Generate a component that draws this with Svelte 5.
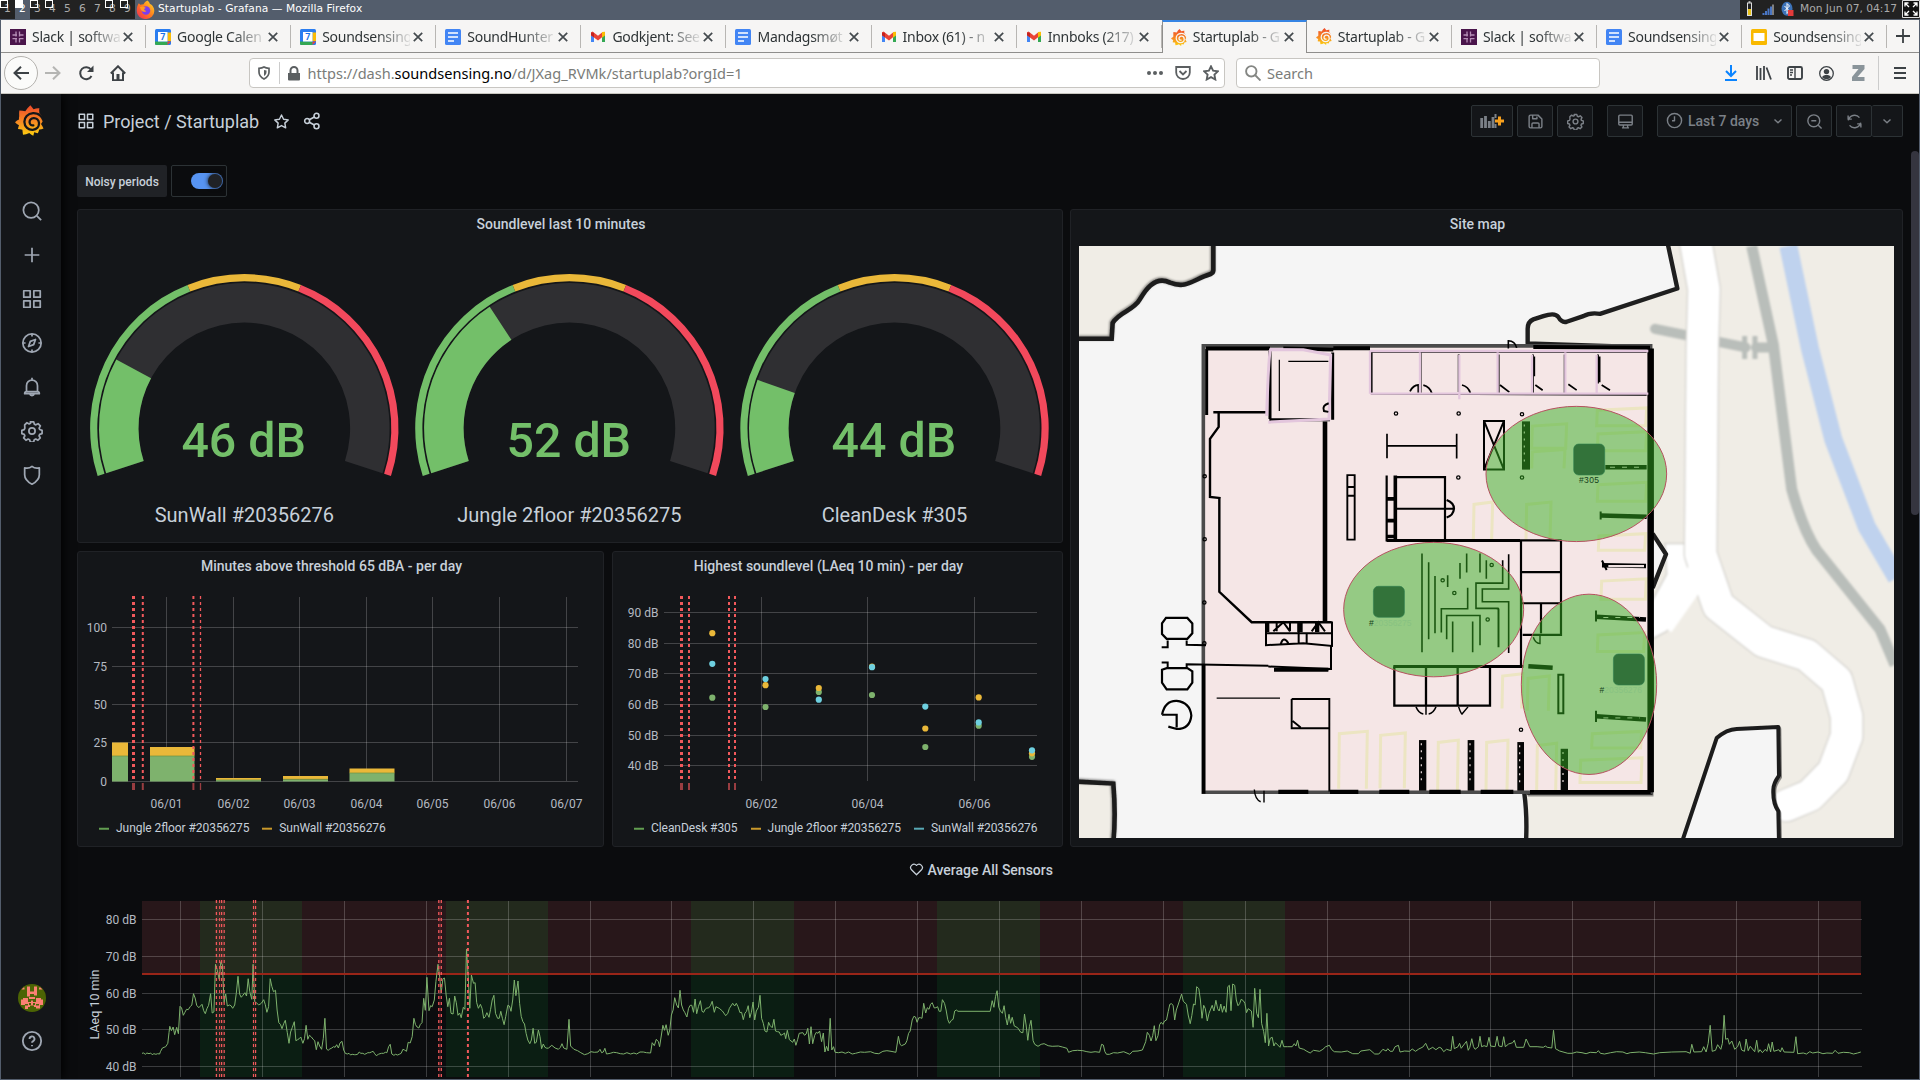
<script>
  const tags = [1, 2, 3, 4, 5, 6, 7, 8, 9];
  const occupied = [1, 3, 4, 8, 9];

  const tabs = [
    { icon: 'slack', text: 'Slack | softwa' },
    { icon: 'cal', text: 'Google Calen' },
    { icon: 'cal', text: 'Soundsensing' },
    { icon: 'doc', text: 'SoundHunter' },
    { icon: 'gmail', text: 'Godkjent: See' },
    { icon: 'doc', text: 'Mandagsmøt' },
    { icon: 'gmail', text: 'Inbox (61) - n' },
    { icon: 'gmail', text: 'Innboks (217)' },
    { icon: 'grafana', text: 'Startuplab - G', active: true },
    { icon: 'grafana', text: 'Startuplab - G' },
    { icon: 'slack', text: 'Slack | softwa' },
    { icon: 'doc', text: 'Soundsensing' },
    { icon: 'slides', text: 'Soundsensing' }
  ];

  const icons = {
    search: '<circle cx="11" cy="11" r="8.4"/><path d="M17.3 17.3 22 22"/>',
    plus: '<path d="M12 4v16M4 12h16"/>',
    apps: '<path d="M3 3h7v7H3zM14 3h7v7h-7zM3 14h7v7H3zM14 14h7v7h-7z"/>',
    compass: '<circle cx="12" cy="12" r="10"/><path d="M12 2v3M12 19v3M2 12h3M19 12h3M15.8 8.2 13.8 13.8 8.2 15.8 10.2 10.2z"/>',
    bell: '<path d="M12 2v2.5M6 17v-6.5a6 6 0 0 1 12 0V17M4 19.3c0-1.5 1-2.3 2-2.3h12c1 0 2 .8 2 2.3zM9.5 19.5a2.6 2.6 0 0 0 5 0"/>',
    cog: '<circle cx="12" cy="12" r="3.4"/><path d="M10.2 2h3.6l.8 2.6 1.6.7 2.4-1.3 2.5 2.5-1.3 2.4.6 1.5 2.6.9v3.5l-2.6.8-.7 1.6 1.3 2.4-2.5 2.5-2.4-1.3-1.6.7-.8 2.6h-3.5l-.8-2.6-1.6-.7-2.4 1.3-2.5-2.5 1.3-2.4-.7-1.6-2.6-.8v-3.5l2.6-.8.7-1.6L4 5.4 6.5 3l2.400 1.300 1.500-.7z"/>',
    shield: '<path d="M4 4.200c3 .8 5.700.3 8-1.700 2.300 2 5 2.500 8 1.700v7.500c0 4.500-3.500 8-8 10.300-4.500-2.300-8-5.800-8-10.300z"/>',
    help: '<circle cx="12" cy="12" r="10"/><path d="M9.300 9.700a2.700 2.700 0 1 1 4 2.400c-.9.5-1.300.9-1.300 1.700M12 16.300v1.300"/>',
    star: '<path d="M12 2.800l2.900 6 6.600.9-4.800 4.600 1.200 6.600L12 17.700l-5.900 3.200 1.200-6.600L2.500 9.700l6.600-.9z"/>',
    share: '<circle cx="18" cy="5" r="3.300"/><circle cx="5.500" cy="12" r="3.300"/><circle cx="18" cy="19" r="3.300"/><path d="M8.400 10.400 15.100 6.700M8.400 13.600l6.700 3.700"/>',
    save: '<path d="M3 5a2 2 0 0 1 2-2h10.500L21 8.500V19a2 2 0 0 1-2 2H5a2 2 0 0 1-2-2zM8 3v5h6V5M7 21v-5.500a1.500 1.500 0 0 1 1.500-1.500h7a1.500 1.500 0 0 1 1.500 1.500V21"/>',
    monitor: '<path d="M4 3h16a1.500 1.500 0 0 1 1.500 1.500v11A1.500 1.500 0 0 1 20 17H4a1.500 1.500 0 0 1-1.500-1.500v-11A1.500 1.500 0 0 1 4 3zM2.500 13h19M9 17v4h6v-4M7 21h10"/>',
    clock: '<circle cx="12" cy="12" r="10"/><path d="M12 6v6.300H8.500"/>',
    down: '<path d="M6 9.500l6 5.500 6-5.500"/>',
    zoomout: '<circle cx="11" cy="11" r="8.400"/><path d="M17.300 17.300 22 22M7.500 11h7"/>',
    sync: '<path d="M3.300 10.500A9 9 0 0 1 19 6.500M3 3.500v5.200h5.200M20.700 13.500A9 9 0 0 1 5 17.500M21 20.500v-5.200h-5.200"/>',
    heart: '<path d="M12 20.500 4 12.500a5 5 0 0 1 8-7 5 5 0 0 1 8 7z"/>'
  };
  const side = ['search', 'plus', 'apps', 'compass', 'bell', 'cog', 'shield'];

  // Point on a circle, angle in degrees clockwise from the top.
  const pt = (cx, cy, r, a) => {
    const t = (a * Math.PI) / 180;
    return `${(cx + r * Math.sin(t)).toFixed(2)} ${(cy - r * Math.cos(t)).toFixed(2)}`;
  };
  function arc(cx, cy, ro, ri, f0, f1) {
    const a = -108 + 216 * f0;
    const b = -108 + 216 * f1;
    const big = b - a > 180 ? 1 : 0;
    return `M${pt(cx, cy, ro, a)}A${ro} ${ro} 0 ${big} 1 ${pt(cx, cy, ro, b)}L${pt(cx, cy, ri, b)}A${ri} ${ri} 0 ${big} 0 ${pt(cx, cy, ri, a)}Z`;
  }
  const gauges = [
    { cx: 244.3, v: 0.214, value: '46 dB', label: 'SunWall #20356276' },
    { cx: 569.4, v: 0.346, value: '52 dB', label: 'Jungle 2floor #20356275' },
    { cx: 894.5, v: 0.1735, value: '44 dB', label: 'CleanDesk #305' }
  ];

  const minuteRows = [['100', 627.5], ['75', 666.5], ['50', 704.5], ['25', 742.5], ['0', 781.5]];
  const minuteCols = [['06/01', 166.5], ['06/02', 233.5], ['06/03', 299.5], ['06/04', 366.5], ['06/05', 432.5], ['06/06', 499.5], ['06/07', 566.5]];
  // x, width, top of the upper series, top of the lower series
  const bars = [[112, 16, 742.5, 756], [150, 44.5, 747, 756], [216, 45, 778, 780], [283, 45, 776, 779.3], [349.5, 45, 768.5, 773]];
  const minuteMarks = [[133.5, 3], [142.8, 2], [193.4, 2], [200.5, 1.3]];

  const levelRows = [['90 dB', 612.5], ['80 dB', 643.5], ['70 dB', 673.5], ['60 dB', 704.5], ['50 dB', 735.5], ['40 dB', 765.5]];
  const levelCols = [['06/02', 761.5], ['06/04', 867.5], ['06/06', 974.5]];
  const G = '#7eb26d', Y = '#eab839', B = '#6ed0e0';
  const dots = [
    [712.3, 697.7, G], [712.3, 633.2, Y], [712.3, 663.8, B],
    [765.5, 707, G], [765.5, 685.2, Y], [765.5, 679, B],
    [818.8, 692, G], [818.8, 688, Y], [818.8, 699.7, B],
    [872, 695, G], [872, 666.7, Y], [872, 667.2, B],
    [925.3, 747, G], [925.3, 728.5, Y], [925.3, 706.6, B],
    [978.7, 725.7, G], [978.7, 697.4, Y], [978.7, 722.4, B],
    [1032, 756.8, G], [1032, 753.3, Y], [1032, 750.3, B]
  ];
  const levelMarks = [[681.5, 3], [689, 2], [729, 2], [735, 2]];

  const avgRows = [['80 dB', 919.5], ['70 dB', 956.5], ['60 dB', 993.5], ['50 dB', 1029.5], ['40 dB', 1066.5]];
  const avgCols = Array.from({ length: 21 }, (_, i) => Math.round(180 + i * 81.9) + 0.5);
  const bands = [[200, 102], [446, 102], [691, 103], [937, 103], [1183, 102]];
  const avgMarks = [[216.4, 1.3], [219.6, 1], [221.6, 1.3], [224.2, 1.2], [253.5, 1.2], [255.6, 1.2], [438.8, 1.3], [441.3, 1.3], [467.9, 2]];

  // Average level samples, three stretches of the week.
  const s1 = '348,610 352,609 356,613 360,609 365,611 369,609 373,614 377,611 382,613 386,611 391,612 393,605 398,594 402,592 406,590 411,580 414,548 416,529 420,542 424,531 428,554 433,532 437,551 441,469 445,474 449,496 453,487 457,478 461,479 466,470 470,465 474,431 478,444 482,466 487,473 491,468 495,463 499,482 503,491 507,476 511,466 516,431 520,489 524,486 528,343 532,358 537,388 541,335 545,345 549,457 553,432 557,468 562,465 566,467 570,475 575,465 579,430 583,379 587,432 591,442 595,436 600,428 604,438 608,386 612,425 617,448 620,343 624,455 629,459 633,464 637,463 641,459 646,449 650,464 654,487 658,470 662,386 666,409 670,425 675,421 679,480 683,518 687,523 691,536 695,521 699,511 704,548 708,580 712,546 716,533 721,515 725,572 729,569 733,566 737,561 742,580 746,566 750,526 754,568 758,556 763,561 767,568 771,572 775,599 779,575 783,588 788,598 792,565 796,505 800,597 804,601 808,597 813,594 817,590 821,592 825,584 829,594 833,579 838,574 842,600 846,610 851,612 855,610 859,615 863,613 868,614 872,614 876,613 880,606 884,610 889,610 893,613 897,611 901,608 906,608 910,606 914,604 918,611 922,617 927,613 931,611 935,610 940,610 944,607 948,608 952,590 956,583 960,612 965,616 969,613 974,615 978,613 983,610 987,598 991,600 996,604 1000,577 1005,579 1010,560 1014,505 1018,524 1022,531 1026,534 1030,523 1034,518 1038,445 1042,481 1046,382 1051,482 1055,467 1059,470 1064,450 1068,395 1073,343 1077,378 1081,429 1085,386 1089,384 1093,435 1097,470 1101,445 1105,490 1110,492 1114,438 1118,458 1122,496 1126,489 1130,503 1135,472 1139,478 1143,297 1147,380 1151,475 1155,375 1160,400 1164,398 1168,458 1172,475 1177,463 1181,475 1185,505 1189,500 1193,488 1198,502 1202,478 1206,450 1210,436 1214,490 1219,505 1223,505 1227,484 1231,505 1235,524 1239,500 1244,466 1248,468 1252,484 1256,450 1260,390 1264,437 1269,393 1273,460 1277,499 1281,515 1285,522 1289,550 1293,570 1298,581 1302,570 1306,535 1310,580 1314,577 1319,540 1323,560 1327,596 1331,582 1335,592 1340,595 1344,594 1352,586 1360,594 1368,598 1373,592 1377,581 1381,594 1389,598 1394,508 1398,588 1406,598 1415,602 1423,608 1432,614 1440,611 1448,605 1456,607 1465,606 1470,598 1474,608 1478,606 1482,595 1486,612 1495,610 1503,607 1511,608 1520,611 1528,612 1536,608 1545,612 1553,609 1560,612';
  const s2 = '0,606 8,606 16,608 26,609 30,578 35,587 40,568 45,575 48,590 56,526 60,541 64,524 69,556 73,540 77,495 81,480 85,443 90,465 94,474 98,421 102,465 106,480 110,488 115,501 119,475 123,466 127,466 131,487 135,447 139,491 143,470 148,452 152,484 156,487 160,477 164,474 168,474 173,466 177,454 182,487 186,470 194,475 202,483 210,497 215,490 219,475 227,460 232,468 236,460 240,470 245,488 249,487 253,509 257,490 261,484 265,467 269,503 273,487 277,456 281,510 285,483 290,472 294,436 298,505 302,520 306,543 311,546 315,517 319,527 324,533 328,508 332,543 337,545 341,546 345,556 350,553 354,549 357,566 361,541 366,569 374,577 378,567 382,586 386,569 390,550 399,548 403,556 407,552 411,535 415,582 419,530 423,581 428,556 432,547 436,550 440,543 445,575 449,549 453,606 457,589 461,603 466,505 470,600 474,590 478,607 486,608 495,606 503,610 511,606 520,612 528,610 540,606 550,607 565,605 575,610 585,611 595,604 605,602 615,604 627,607 633,559 637,583 641,587 650,582 654,572 658,550 662,543 667,510 671,499 675,501 679,517 683,503 687,503 691,505 695,460 700,489 704,473 708,478 712,463 716,458 721,474 725,473 729,470 733,484 737,484 741,449 746,460 750,480 754,509 758,520 763,511 767,508 771,483 775,480 779,484 858,484 863,452 867,472 871,440 875,422 879,472 883,483 888,490 892,467 896,502 900,525 904,493 908,520 912,502 917,528 925,533 933,547 938,548 942,492 946,525 950,571 954,530 958,511 963,572 967,583 975,589 983,583 990,581 1000,587 1010,589 1025,588 1035,591 1046,595 1050,607 1060,602 1072,601 1085,602 1095,605 1105,607 1115,605 1126,607 1131,583 1135,585 1139,605 1143,613 1150,613 1160,608 1170,609 1185,605 1200,613 1207,604 1220,603 1231,600 1239,575 1243,547 1248,556 1252,573 1256,557 1260,527 1264,572 1269,557 1273,524 1277,517 1281,523 1285,513 1290,510 1294,485 1298,463 1302,461 1306,466 1310,510 1314,480 1319,462 1327,432 1331,454 1339,463 1343,495 1348,521 1352,497 1356,462 1360,465 1364,410 1369,416 1373,450 1377,505 1381,466 1385,476 1390,513 1394,490 1402,466 1406,483 1411,451 1415,476 1419,483 1423,462 1427,487 1431,468 1436,487 1440,410 1444,406 1448,482 1452,402 1457,406 1461,450 1465,467 1469,461 1473,448 1478,452 1482,460 1486,488 1490,476 1498,483 1502,532 1506,415 1511,490 1515,503 1519,418 1523,520 1528,545 1532,578 1536,490 1540,588 1544,565 1549,562 1553,588 1557,578';
  const s3 = '0,592 5,571 9,590 18,590 30,590 35,581 39,588 43,571 47,594 58,598 66,604 74,609 82,601 97,604 105,598 112,590 121,586 127,599 133,605 150,606 165,603 178,611 192,611 198,603 220,599 232,612 242,612 252,598 260,603 264,596 270,604 276,604 282,590 290,586 294,606 305,603 318,604 324,597 332,604 340,597 350,591 357,580 364,599 374,592 382,599 390,592 395,594 401,605 408,598 419,602 423,559 427,596 436,590 440,580 444,595 450,585 457,574 461,601 465,592 470,566 474,590 478,598 486,590 490,559 494,590 500,587 507,590 512,562 516,588 527,590 532,559 536,588 544,590 548,560 552,590 560,582 570,578 574,571 579,592 597,592 603,567 612,590 630,590 645,592 650,588 655,592 666,594 670,541 675,596 685,603 705,610 716,610 727,606 740,608 750,611 760,607 775,608 780,602 785,610 795,612 810,608 825,605 840,606 850,611 858,608 880,606 895,608 915,612 930,608 960,606 995,605 1005,610 1009,583 1014,606 1033,605 1038,590 1044,606 1049,580 1054,526 1059,604 1067,601 1072,584 1080,598 1084,580 1088,496 1092,568 1097,565 1101,583 1107,573 1114,598 1121,590 1126,574 1131,600 1138,604 1142,567 1147,602 1152,589 1163,605 1168,571 1172,607 1176,599 1182,608 1189,598 1193,604 1197,581 1202,606 1206,576 1210,604 1222,599 1226,606 1230,593 1235,606 1259,607 1264,560 1268,611 1282,609 1290,612 1298,605 1305,609 1318,606 1330,611 1340,609 1354,610 1360,601 1367,610 1380,607 1395,608 1405,612 1415,609 1423,606';
  const series = [s1, s2, s3]
    .map((s, i) =>
      s.split(' ').map((p) => {
        const [x, y] = p.split(',').map(Number);
        return `${(640 * i + x / 2.45).toFixed(1)},${(850 + y / 3).toFixed(1)}`;
      }).join(' ')
    )
    .join(' ');

  // Yellow desk outlines on the floor plan: x, y, width, height
  const desks = [
    [806, 1268, 86, 145], [930, 1272, 76, 140], [1103, 1290, 62, 128], [1248, 1290, 66, 128], [1210, 688, 58, 95],
    [1385, 490, 105, 62], [1385, 555, 100, 48], [1368, 688, 75, 95], [1580, 450, 150, 45], [1582, 510, 148, 48],
    [1582, 638, 148, 48], [1585, 768, 142, 42], [1593, 882, 136, 52], [1582, 1018, 142, 48], [1565, 1268, 150, 42],
    [1530, 1335, 186, 62], [1296, 1122, 62, 88], [1372, 1128, 66, 88], [1400, 1298, 60, 120]
  ];
  // Dark hatched shelves: x, y, width, height
  const shelves = [
    [1047, 1290, 22, 128], [1193, 1290, 20, 128], [1342, 1295, 20, 123], [1472, 1312, 22, 106],
    [1356, 484, 24, 122]
  ];
</script>

{#snippet icon(name, size, w = 2)}
  <svg class="ico" width={size} height={size} viewBox="0 0 24 24" stroke-width={w}>{@html icons[name]}</svg>
{/snippet}

{#snippet grafana(w, h)}
  <svg width={w} height={h} viewBox="0 0 29 31">
    <defs>
      <linearGradient id="flame" x1="0" y1="1" x2="0" y2="0">
        <stop offset="0" stop-color="#fcd00f" /><stop offset=".45" stop-color="#f78b22" /><stop offset="1" stop-color="#ee4a2b" />
      </linearGradient>
    </defs>
    <path fill="url(#flame)" d="M15.400.200Q17 2 18.600 4.200 21.500 3 24.400 3.300 23.800 5.500 24.300 7.800 27.600 10.500 28.300 15.500L26 19Q27.500 21 28.500 23.500 26.500 24.300 24.300 24.600 23.600 27 22.800 28.200 21 28 19.200 27.300L18.300 30.800Q15.800 29.600 14.300 28 11 29.600 8 29.800 7.600 27 7.400 24.700 5 24.300 3 24 3.300 22 4 20.200 1.800 19 0 17.200 2 15.300 4 14.500 3.800 12.800 4.200 11.200 4 8 4.300 5.400 7.500 5.500 10.300 6.200 12.400 2.800 15.400.200Z" />
    <path class="swirl" d="M29 16.500C27 10.500 22.500 8 18 8.200 12.700 8.500 9.300 12.500 9.400 17 9.500 22 13.500 25 17.700 24.800 21.700 24.500 24.200 21.600 24 18 23.800 14.900 21.300 13 18.700 13.100 16 13.300 14.400 15.400 14.600 17.500 14.800 19.600 16.500 20.700 18.300 20.300" />
  </svg>
{/snippet}

{#snippet favicon(kind)}
  {#if kind === 'grafana'}
    {@render grafana(16, 17)}
  {:else}
    <svg width="16" height="16" viewBox="0 0 16 16">
      {#if kind === 'slack'}
        <rect width="16" height="16" fill="#4a154b" />
        <path d="M6 2.500v5M9.500 2.500v5M6 9v4.500M9.500 9v4.500M2.500 6h4.500M9 6h4.500M2.500 9.700h4.500M9 9.700h4.500" stroke="#b58fb6" stroke-width="1.300" fill="none" />
      {:else if kind === 'cal'}
        <rect width="16" height="16" rx="1.500" fill="#2a7df0" />
        <path d="M12.500 3.500H16V12h-3.500z" fill="#fbbc04" /><path d="M0 12.500h12.500V16H1.500A1.500 1.500 0 0 1 0 14.500z" fill="#34a853" /><path d="M12.500 12.500H16L12.500 16z" fill="#ea4335" />
        <rect x="3" y="3" width="9.500" height="9.500" fill="#fff" />
        <text x="7.800" y="11" font-size="9" font-weight="700" text-anchor="middle" fill="#1a73e8">7</text>
      {:else if kind === 'doc'}
        <rect width="16" height="16" rx="1.500" fill="#4285f4" /><path d="M3 4h10M3 8h10M3 12h6" stroke="#fff" stroke-width="1.700" />
      {:else if kind === 'slides'}
        <rect width="16" height="16" rx="1.500" fill="#f9b900" /><rect x="2.500" y="4" width="11" height="8" fill="#fff" />
      {:else}
        <path d="M1 4v9h3V6.500z" fill="#4285f4" /><path d="M15 4v9h-3V6.500z" fill="#34a853" /><path d="M12 3l3-.2V6.500l-3 2.300z" fill="#fbbc04" />
        <path d="M1 3.500l1.500-1L8 6.800l4-3.300v4.800L8 11.500 1 6.300z" fill="#ea4335" /><path d="M1 3.500 4 3.700V8.300L1 6.300z" fill="#c5221f" />
      {/if}
    </svg>
  {/if}
{/snippet}

<div class="screen">
  <div class="wm">
    {#each tags as t}
      <span class="tag" class:sel={t === 2}>
        {#if occupied.includes(t)}<i class="sq"></i>{:else if t === 2}<i class="sq full"></i>{/if}{t}
      </span>
    {/each}
    <svg class="fox" width="19" height="19" viewBox="0 0 20 20">
      <defs><linearGradient id="fox" x1="1" y1="0" x2="0" y2="1"><stop offset="0" stop-color="#ffe226" /><stop offset=".5" stop-color="#ff7a1f" /><stop offset="1" stop-color="#f0245c" /></linearGradient></defs>
      <path fill="url(#fox)" d="M12 .5c2 1.500 2.500 3 2.500 3.500C17 5 19.300 8 19.300 11.500a9.200 8.500 0 0 1-18.500 0C.8 8 1.500 5.500 3 3.500L4.500 5 8 4.500C9 2.500 10 1.500 12 .5z" />
      <circle cx="10.500" cy="11" r="4.500" fill="#7a3df0" /><path d="M4 7.500c3-1.500 5 0 6.500 1-3 .5-2 3 .5 3-2 2-5 .5-5.500-1z" fill="#ff9a24" />
    </svg>
    <span class="wtitle">Startuplab - Grafana — Mozilla Firefox</span>
    <div class="tray">
      <svg width="54" height="20" viewBox="0 0 54 20">
        <rect x="7.500" y="3" width="4" height="12.500" fill="#222" stroke="#ddd" /><rect x="8" y="9" width="3" height="6" fill="#e8c21a" /><rect x="8.500" y="1.300" width="2" height="1.500" fill="#ddd" />
        <path d="M23.500 15v-2M26 15v-4M28.500 15V8.500M31 15V6.500" stroke="#4a76c4" stroke-width="2" /><path d="M33 15V4.500" stroke="#ddd" stroke-width="1" />
        <ellipse cx="47" cy="8.700" rx="5.500" ry="7" fill="#3c72b8" /><path d="M44.500 6l5 5-2.500 2.500V3.500l2.500 2.500-5 5" fill="none" stroke="#fff" /><rect x="48" y="10" width="5.500" height="6" fill="#e23b3b" />
      </svg>
      <span class="clock">Mon Jun 07, 04:17</span>
      <svg width="18" height="18" viewBox="0 0 18 18"><path d="M.5.500h17v17H.5z" fill="#111" stroke="#ddd" /><path d="M3 6.500V3h3.500M3 3l4 4M11.500 3H15v3.500M15 3l-4 4M3 11.500V15h3.500M3 15l4-4M15 11.500V15h-3.500M15 15l-4-4" fill="none" stroke="#fff" stroke-width="1.300" /></svg>
    </div>
  </div>

  <div class="tabs">
    {#each tabs as t}
      <div class="tab" class:active={t.active}>
        {@render favicon(t.icon)}
        <span class="tlabel">{t.text}</span>
        <svg width="10" height="10" viewBox="0 0 10 10"><path d="M.8.800l8.400 8.400M9.200.800.8 9.200" stroke="#444a4e" stroke-width="1.700" /></svg>
      </div>
    {/each}
    <div class="newtab"><svg width="14" height="14" viewBox="0 0 14 14"><path d="M7 0v14M0 7h14" stroke="#3a3f42" stroke-width="1.800" /></svg></div>
  </div>

  <div class="nav">
    <div class="back"><svg width="16" height="14" viewBox="0 0 16 14"><path d="M8 .8 1.500 7 8 13.200M1.500 7H16" fill="none" stroke="#3d4246" stroke-width="2" /></svg></div>
    <svg class="fwd" width="16" height="14" viewBox="0 0 16 14"><path d="M8 .8 14.500 7 8 13.200M14.500 7H0" fill="none" stroke="#b5b5b3" stroke-width="2" /></svg>
    <svg class="rel" width="16" height="16" viewBox="0 0 16 16"><path d="M13.500 11A6 6 0 1 1 13 4.500" fill="none" stroke="#3d4246" stroke-width="2" /><path d="M15.500.500v6.500H9z" fill="#3d4246" /></svg>
    <svg class="home" width="16" height="16" viewBox="0 0 16 16"><path d="M.8 8.500 8 1.300l7.200 7.200M3 7.500v7.700h10V7.500" fill="none" stroke="#3d4246" stroke-width="2" /><path d="M6.500 9h3v6h-3z" fill="#3d4246" /></svg>
    <div class="url">
      <svg width="12" height="14" viewBox="0 0 12 14"><path d="M1 2.300C3 2.300 4.500 2 6 1c1.500 1 3 1.300 5 1.300V6c0 3.500-2 5.500-5 7-3-1.500-5-3.500-5-7z" fill="none" stroke="#5b5f61" stroke-width="1.700" /><path d="M6 4v6c1.700-1 2.500-2.300 2.500-4V4.500z" fill="#5b5f61" /></svg>
      <i class="vsep"></i>
      <svg width="12" height="15" viewBox="0 0 12 15"><path d="M0 7h12v6.500a1 1 0 0 1-1 1H1a1 1 0 0 1-1-1z" fill="#5b5f61" /><path d="M2.500 7V4.500a3.500 3.500 0 0 1 7 0V7" fill="none" stroke="#5b5f61" stroke-width="2" /></svg>
      <span class="addr">https://dash.<b>soundsensing.no</b>/d/JXag_RVMk/startuplab?orgId=1</span>
      <svg width="16" height="16" viewBox="0 0 16 16" fill="#5b5f61"><circle cx="2" cy="8" r="2" /><circle cx="8" cy="8" r="2" /><circle cx="14" cy="8" r="2" /></svg>
      <svg width="16" height="16" viewBox="0 0 16 16" fill="none" stroke="#5b5f61" stroke-width="1.800"><path d="M1.200 2h13.600v5.500A6.800 6.500 0 0 1 1.200 7.500zM4.500 6 8 9.500 11.500 6" /></svg>
      <svg width="16" height="16" viewBox="1 1 22 22" fill="none" stroke="#5b5f61" stroke-width="2.600">{@html icons.star}</svg>
    </div>
    <div class="srch">
      <svg width="16" height="16" viewBox="0 0 16 16" fill="none" stroke="#848683" stroke-width="1.900"><circle cx="6.300" cy="6.300" r="5.200" /><path d="m10 10 5.500 5.500" /></svg>
      <span>Search</span>
    </div>
    <div class="tools">
      <svg width="12" height="16" viewBox="0 0 12 16"><path d="M6 0v11M1 6l5 5 5-5M0 15h12" fill="none" stroke="#0a84ff" stroke-width="2" /></svg>
      <svg width="16" height="14" viewBox="0 0 16 14"><path d="M1 0v14M4.500 2v12M8 0v14M10.500 1.500 15 13.500" fill="none" stroke="#3d4246" stroke-width="1.800" /></svg>
      <svg width="16" height="14" viewBox="0 0 16 14"><rect x="1" y="1" width="14" height="12" rx="1.500" fill="none" stroke="#3d4246" stroke-width="1.900" /><path d="M8 1v12M3 4h3M3 6.500h3M3 9h2" stroke="#3d4246" stroke-width="1.400" /></svg>
      <svg width="15" height="15" viewBox="0 0 15 15"><circle cx="7.500" cy="7.500" r="6.800" fill="none" stroke="#3d4246" stroke-width="1.300" /><circle cx="7.500" cy="5.600" r="2.700" fill="#3d4246" /><path d="M3 11.200c1-2 2.500-2.300 4.500-2.300s3.500.3 4.500 2.300a6 6 0 0 1-9 0z" fill="#3d4246" /></svg>
      <svg width="13" height="16" viewBox="0 0 13 16"><path d="M.5 0h12v4L5.500 12h7v4H0v-4l6.500-8h-6z" fill="#8a949a" /></svg>
      <i class="vsep tall"></i>
      <svg width="12" height="12" viewBox="0 0 12 12"><path d="M0 1h12M0 6h12M0 11h12" stroke="#3d4246" stroke-width="2" /></svg>
    </div>
  </div>

  <div class="app">
    <aside>
      <div class="logo">{@render grafana(29, 31)}</div>
      {#each side as s}<div class="sitem">{@render icon(s, 22, 1.9)}</div>{/each}
      <div class="grow"></div>
      <svg class="avatar" width="28" height="28" viewBox="0 0 28 28">
        <circle cx="14" cy="14" r="14" fill="#4c6404" />
        <path fill="#fb8073" d="M9 2.500h3v5h4v-5h3v9h-3V10h-4v2.500h-3zM5 14h5v4h3v-1.500h2V18h3v-4h5v1.500h2V21h-3v3.500h-4V23h-2v-1.500h-4V23h-2v2H7v-4H3v-5.500h2zM11 13h6v2h-6zM3.500 5.500h3v-2h-1zM21 3.500h1.500l2 2H21z" />
        <path fill="#4c6404" d="M7 20h3v1.500H7zM18 20h3v1.500h-3zM11 19h2v2h-2zM15 19h2v2h-2z" />
      </svg>
      <div class="help">{@render icon('help', 22, 2)}</div>
    </aside>

    <main>
      <header>
        {@render icon('apps', 18, 2)}
        <h1>Project / Startuplab</h1>
        <span class="st">{@render icon('star', 17, 2)}</span>
        {@render icon('share', 18, 2.1)}
        <div class="btns">
          <div class="btn add"><svg width="25" height="14" viewBox="0 0 25 14"><path d="M1.700 4v10M5.500 2v12M9.300 7v7M13 3v11" stroke="#7b8087" stroke-width="2.800" /><path d="M15.500 0v4M15.500 10v4" stroke="#7b8087" stroke-width="2" /><path d="M19.500 2.500v9M15 7h9" stroke="#f7a01d" stroke-width="3" /></svg></div>
          <div class="btn">{@render icon('save', 17)}</div>
          <div class="btn">{@render icon('cog', 17)}</div>
          <div class="btn mon">{@render icon('monitor', 17)}</div>
          <div class="btn time">{@render icon('clock', 17)}<span>Last 7 days</span>{@render icon('down', 14, 2.5)}</div>
          <div class="btn">{@render icon('zoomout', 17)}</div>
          <div class="btn ref">{@render icon('sync', 17)}</div>
          <div class="btn dd">{@render icon('down', 14, 2.5)}</div>
        </div>
      </header>

      <div class="vars">
        <span class="vlabel">Noisy periods</span>
        <span class="vbox"><span class="toggle"><i></i></span></span>
      </div>

      <div class="grid">
        <section class="panel wide">
          <h2>Soundlevel last 10 minutes</h2>
          <svg width="985" height="304" viewBox="77 239 985 304">
            {#each gauges as g}
              <path d={arc(g.cx, 428.3, 154.2, 147, 0, 0.4)} fill="#73bf69" />
              <path d={arc(g.cx, 428.3, 154.2, 147, 0.4, 0.6)} fill="#eab839" />
              <path d={arc(g.cx, 428.3, 154.2, 147, 0.6, 1)} fill="#f2495c" />
              <path d={arc(g.cx, 428.3, 145.3, 105.8, 0, 1)} fill="#2f2f32" />
              <path d={arc(g.cx, 428.3, 145.3, 105.8, 0, g.v)} fill="#73bf69" />
              <text class="gval" x={g.cx - 0.6} y="456.700">{g.value}</text>
              <text class="glab" x={g.cx} y="522">{g.label}</text>
            {/each}
          </svg>
        </section>

        <section class="panel map">
          <h2>Site map</h2>
          <svg width="815" height="592" viewBox="1079 246 815 592" class="plan">
            <defs>
              <filter id="shadow" x="-10%" y="-10%" width="120%" height="120%"><feDropShadow dx="-2" dy="-2" stdDeviation="2.500" flood-color="#000" flood-opacity=".5" /></filter>
              <filter id="shadow2" x="-10%" y="-10%" width="120%" height="120%"><feDropShadow dx="3" dy="4" stdDeviation="2" flood-color="#000" flood-opacity=".45" /></filter>
              <filter id="soft"><feGaussianBlur stdDeviation=".9" /></filter>
            </defs>
            <rect x="1079" y="246" width="815" height="592" fill="#f0ede6" />
            <g filter="url(#soft)">
              <g transform="translate(1070 230) scale(.33333 .39541)" class="ns">
                <path d="M1755 250 2027 297M2058 297h50" stroke="#b9beba" stroke-width="10" stroke-linecap="round" />
                <path d="M2024 268v58M2055 268v58" stroke="#b9beba" stroke-width="5" />
                <path d="M2045 40 2110 290 2165 655Q2200 760 2240 810L2430 1010 2475 1100" stroke="#b9beba" stroke-width="11" />
                <path d="M2155 40 2220 300 2290 530 2390 750 2480 880" stroke="#bfd2ee" stroke-width="18" />
                <path d="M1785 793H1892V905L1875 915 1790 1015 1745 1035V940L1790 870Z" fill="#fff" stroke="#d3d1cc" stroke-width="1.500" />
                <path d="M1877 30 1902 150 1897 300 1892 820 1945 950 2080 1040 2210 1075 2300 1140 2330 1230V1280L2290 1370 2220 1430 2150 1455" stroke="#d3d1cc" stroke-width="34" stroke-linecap="round" stroke-linejoin="round" />
                <path d="M1877 30 1902 150 1897 300 1892 820 1945 950 2080 1040 2210 1075 2300 1140 2330 1230V1280L2290 1370 2220 1430 2150 1455" stroke="#fff" stroke-width="31.500" stroke-linecap="round" stroke-linejoin="round" />
                <path d="M1892 790V860L1775 1000" stroke="#fff" stroke-width="24" />
              </g>
            </g>
            <g transform="translate(1070 230) scale(.33333 .39541)" class="ns">
              <path d="M20 275 125 275 128 235C150 205 190 205 210 175 240 130 270 120 300 133 350 150 370 125 420 112Q431 108 430 100V30H1790L1822 148 1590 212Q1560 208 1540 218L1490 232Q1475 235 1465 220 1455 208 1420 218L1390 226Q1373 232 1373 250V290L1740 297V770L1788 820 1748 905V1425H1365L1368 1550H130Q138 1480 130 1400L20 1395Z" fill="#f5f5f5" />
              <path d="M20 275 125 275 128 235C150 205 190 205 210 175 240 130 270 120 300 133 350 150 370 125 420 112Q431 108 430 100V30H20Z" fill="#f0ede6" /><path d="M20 1395 130 1400Q138 1480 130 1550H20Z" fill="#f0ede6" />
              <g filter="url(#shadow)"><path d="M20 275 125 275 128 235C150 205 190 205 210 175 240 130 270 120 300 133 350 150 370 125 420 112Q431 108 430 100V30" stroke="#1f1f1f" stroke-width="4.600" /><path d="M20 1395 130 1400Q138 1480 130 1550" stroke="#1f1f1f" stroke-width="4.600" /></g>
              <path d="M1792 30 1822 148 1590 212Q1560 208 1540 218L1490 232Q1475 235 1465 220 1455 208 1420 218L1390 226Q1373 232 1373 250V287L1740 297M1748 768 1788 820 1748 905M1363 1425Q1372 1480 1368 1550" stroke="#1f1f1f" stroke-width="4.400" stroke-linejoin="round" />
              <g filter="url(#shadow2)"><path d="M1835 1550 1940 1285Q1970 1263 2000 1262L2125 1257 2127 1380Q2110 1400 2110 1415 2108 1450 2125 1470L2127 1550" fill="#f5f5f5" stroke="#1f1f1f" stroke-width="4" stroke-linejoin="round" />
              <path d="M1370 1422H1740V1000" stroke="#111" stroke-width="5" /></g>

              <path d="M400 293H1742V1422H400Z" fill="#f5e6e6" stroke="#4b4b4b" stroke-width="3.600" />
              {#each desks as d}<path d="M{d[0]} {d[1] + d[3]} {d[0] + 2} {d[1] + 6} {d[0] + d[2]} {d[1]} {d[0] + d[2] - 3} {d[1] + d[3]}{d[2] > 100 ? 'z' : ''}" stroke="#ece5c2" stroke-width="3" />{/each}

              <g stroke="#000">
                <path d="M408 300H600M640 300 790 302M790 299H900" stroke-width="4" />
                <path d="M410 300V468M600 306V478M780 480 598 480M788 310V480" stroke-width="3" />
                <path d="M430 461H590M446 463V498L420 528V675L452 678M448 680V915L545 992H785" stroke-width="2.400" /><path d="M628 328V458M655 332H775" stroke-width="1.200" />
                <path d="M765 484V990" stroke-width="4.600" />
                <path d="M588 992V1050L700 1045 786 1052V990M590 1020H786M620 992V1015M660 992V1015M686 992V1045M710 1045V1020M740 992V1015M610 1015 640 992 660 1015M725 1015 745 992 765 1015M632 1048Q640 1025 655 1045" stroke-width="2" />
                <path d="M588 1005H598M682 1005H698M735 1005H748" stroke-width="9" />
                <path d="M783 1050V1110L595 1104M612 1112H775M275 1094H293V1106M350 1106V1098L595 1102M275 1055H293V1038M350 1038V1049L408 1050" stroke-width="2" /><path d="M612 1112H775" stroke-width="4" />
                <path d="M288 981H352L367 995V1020L352 1034H290L276 1022V995ZM290 1108H352L367 1116V1145L352 1162H290L276 1145V1112Z" stroke-width="2.200" />
                <path d="M276 1226Q285 1190 320 1191 360 1195 364 1228 360 1262 320 1262L295 1256M276 1226H320V1258" stroke-width="2.200" />
                <path d="M440 1184H630" stroke-width="1.300" /><path d="M665 1186H778V1420M665 1186V1260H778M668 1242 692 1258" stroke-width="1.900" />
                <path d="M401 1100V1426" stroke-width="3.600" />
                <path d="M625 1421H715M780 1421H865M928 1421H1018M1078 1421H1172M1232 1421H1330" stroke-width="4.200" /><path d="M553 1415Q555 1440 572 1446M582 1418V1448" stroke-width="1.400" />
                <path d="M1742 300V1422" stroke-width="6.500" /><path d="M1380 1421H1742" stroke-width="4" /><path d="M1390 296 1740 298" stroke-width="4" /><path d="M1315 300V280Q1335 280 1340 298" stroke-width="1.600" />
                <path d="M903 308H1730M903 414 1730 417M905 308V412M1052 308V415M1166 315V410M1286 315V415M1389 315V415M1484 315V415M1584 315V388" stroke-width="1.800" /><path d="M1587 320V385M1391 320V370" stroke-width="3" />
                <path d="M1020 408Q1030 392 1045 392V412M1060 392Q1080 396 1086 414M1176 392Q1195 396 1201 412M1290 392 1318 410M1396 392 1418 405M1495 390 1520 405M1595 392 1620 405" stroke-width="1.800" />
                <path d="M951 515V577M951 546H1160M1160 515V578" stroke-width="1.700" />
                <path d="M1242 483H1302V606H1242ZM1242 483 1302 606M1302 483 1242 606" stroke-width="2" />
                <path d="M832 620V783H854V620ZM832 650H854M832 672H854" stroke-width="1.900" />
                <path d="M976 625H1125V783M976 705H1150M1130 683Q1152 690 1152 705 1150 722 1130 727M950 621V785H1475M1353 786V1104M1473 786V1024H1358M1353 865H1473M1353 944H1473M1413 944V1020" stroke-width="2.200" />
                <path d="M976 621V785M951 680H972M951 735H972M951 775H972" stroke-width="3.600" /><path d="M950 785H1350M970 1104H1360" stroke-width="3" />
                <path d="M973 1104V1203H1260V1104M1068 1104V1203M1163 1104V1203" stroke-width="2.300" /><path d="M1068 1203V1226M1038 1206Q1046 1222 1060 1224M1098 1206Q1090 1222 1076 1224M1166 1206Q1172 1222 1176 1224L1194 1206" stroke-width="1.500" />
                <path d="M1056 818V1068M1076 840V1035M1095 875V1020M1193 905V958H1114V1018M1130 1035V975H1230V1050M1148 990V1068M1208 990V1068M1286 958V1055M1286 893H1218V957H1286M1286 908H1237V940H1286M1170 842V882M1190 818V866M1230 818V866M1249 835V882M1133 873V903M1280 893H1298V835M1280 908H1316V820M1280 940H1316V1070M1280 958H1285V1055" stroke-width="1.600" />
                <path d="M1606 600H1730M1592 722 1730 725M1596 848 1728 850M1578 978 1728 985M1578 1230 1728 1238M1375 1103 1448 1107" stroke-width="4.500" /><path d="M1578 962V990M1578 1216V1244M1592 712V732M1596 836 1610 860" stroke-width="2" />
                <path d="M1465 1125V1222H1480V1125Z" stroke-width="2" />
                <path d="M1390 1030Q1395 1045 1410 1046V1024" stroke-width="1.400" />
              </g>
              {#each shelves as s}<rect x={s[0]} y={s[1]} width={s[2]} height={s[3]} fill="#050505" /><path d="M{s[0] + 7} {s[1] + 8}V{s[1] + s[3] - 20}" stroke="#e8dada" stroke-width="1.200" stroke-dasharray="2 5" />{/each}
              <path d="M1615 850H1722" stroke="#f0e2e2" stroke-width="2.200" /><path d="M1620 600H1725M1600 980H1710M1600 1234H1710" stroke="#e8dada" stroke-width="1" stroke-dasharray="5 7" />
              <path d="M900 306H1735M900 414 1735 414M900 306V414M1050 310V412M1168 316V428M1283 310V412M1386 316V412M1486 310V412M1580 316V412" stroke="#e3c6dd" stroke-width="2.300" />
              <path d="M590 470Q596 310 602 302L700 303 782 316 777 478 595 486" stroke="#e3c6dd" stroke-width="3" /><path d="M776 438Q755 444 762 458L775 460" stroke="#000" stroke-width="2" />
              {#each [[978, 464], [1166, 464], [1165, 626], [404, 623], [404, 782], [403, 942], [403, 1045], [1356, 466], [1356, 626], [1353, 1264], [1118, 886], [1153, 918], [1265, 847], [1253, 985]] as c}<ellipse cx={c[0]} cy={c[1]} rx="5" ry="4" stroke="#000" stroke-width="1.300" />{/each}

              <g fill="#35ad21" fill-opacity=".5" stroke="#b5525f" stroke-width="1">
                <ellipse cx="1519" cy="617" rx="271" ry="171" />
                <ellipse cx="1091" cy="960" rx="270" ry="170" />
                <ellipse cx="1557" cy="1149" rx="203" ry="228" />
              </g>
            </g>
            <g fill="#33733a" stroke="#2f7f4f" stroke-width=".6">
              <rect x="1573.700" y="444" width="31" height="31" rx="5" />
              <rect x="1373.400" y="586.300" width="31" height="31" rx="5" />
              <rect x="1613.400" y="654" width="31" height="31" rx="5" />
            </g>
            <g class="mtext">
              <text x="1579" y="482.500" textLength="20">#305</text>
              <text x="1369" y="625.500">#<tspan fill="#88c282">20356275</tspan></text>
              <text x="1599.500" y="692.500">#<tspan fill="#88c282">20356276</tspan></text>
            </g>
          </svg>
        </section>

        <section class="panel">
          <h2>Minutes above threshold 65 dBA - per day</h2>
          <svg width="527" height="266" viewBox="77 581 527 266" class="chart">
            {#each minuteCols as c}<path class="gl" d="M{c[1]} 597V781" /><text x={c[1]} y="807.500" text-anchor="middle">{c[0]}</text>{/each}
            {#each minuteRows as r}<path class="gl" d="M112 {r[1]}H578" /><text x="107" y={r[1] + 4.5} text-anchor="end">{r[0]}</text>{/each}
            {#each bars as b}
              <rect x={b[0]} y={b[3]} width={b[1]} height={781.5 - b[3]} fill="#7eb26d" />
              <rect x={b[0]} y={b[2]} width={b[1]} height={b[3] - b[2]} fill="#eab839" />
              <path d="M{b[0]} {b[3]}h{b[1]}" stroke="#6f8f3f" stroke-width=".7" />
            {/each}
            {#each minuteMarks as m}<path class="mk" stroke-width={m[1]} d="M{m[0]} 596V782" /><path class="mt" stroke-width={m[1]} d="M{m[0]} 783V790" />{/each}
            <path d="M99 828.700h10" stroke="#629e51" stroke-width="2" /><text class="lg" x="116" y="832" textLength="133.400">Jungle 2floor #20356275</text>
            <path d="M262 828.700h10" stroke="#c9992b" stroke-width="2" /><text class="lg" x="279.300" y="832" textLength="106.500">SunWall #20356276</text>
          </svg>
        </section>

        <section class="panel">
          <h2>Highest soundlevel (LAeq 10 min) - per day</h2>
          <svg width="451" height="266" viewBox="612 581 451 266" class="chart">
            {#each levelCols as c}<path class="gl" d="M{c[1]} 597V781" /><text x={c[1]} y="807.500" text-anchor="middle">{c[0]}</text>{/each}
            {#each levelRows as r}<path class="gl" d="M664 {r[1]}H1037" /><text x="658.500" y={r[1] + 4.5} text-anchor="end">{r[0]}</text>{/each}
            {#each levelMarks as m}<path class="mk" stroke-width={m[1]} d="M{m[0]} 596V782" /><path class="mt" stroke-width={m[1]} d="M{m[0]} 783V790" />{/each}
            {#each dots as d}<circle cx={d[0]} cy={d[1]} r="3.100" fill={d[2]} />{/each}
            <path d="M634 828.700h10" stroke="#629e51" stroke-width="2" /><text class="lg" x="651" y="832" textLength="86.500">CleanDesk #305</text>
            <path d="M751 828.700h10" stroke="#c9992b" stroke-width="2" /><text class="lg" x="767.600" y="832" textLength="133.400">Jungle 2floor #20356275</text>
            <path d="M914 828.700h10" stroke="#58a9b5" stroke-width="2" /><text class="lg" x="931" y="832" textLength="106.500">SunWall #20356276</text>
          </svg>
        </section>

        <section class="panel last">
          <h2>{@render icon('heart', 15, 2)}Average All Sensors</h2>
          <svg width="1826" height="193" viewBox="77 885 1826 193" class="chart">
            <rect x="142" y="901" width="1719" height="73" fill="#28171a" />
            {#each bands as b}
              <rect x={b[0]} y="901" width={b[1]} height="73" fill="#232a1d" /><rect x={b[0]} y="974" width={b[1]} height="104" fill="#0b1e13" />
            {/each}
            {#each avgCols as x}<path class="gl" d="M{x} 901V1078" />{/each}
            {#each avgRows as r}<path class="gl" d="M142 {r[1]}H1862" /><text x="136.500" y={r[1] + 4.7} text-anchor="end">{r[0]}</text>{/each}
            <path d="M142 974H1861" stroke="#9a2518" stroke-width="2" />
            <polyline points={series} fill="none" stroke="#7eb26d" stroke-width="1" />
            <path d="M216 900h8.500v178H216zM253 900h3v178H253zM438.500 900h3v178h-3z" fill="#f2495c" fill-opacity=".1" />
            {#each avgMarks as m}<path class="mk" stroke-width={m[1]} d="M{m[0]} 900V1078" />{/each}
            <text class="axis" transform="translate(98.800 1004.500) rotate(-90)" text-anchor="middle">LAeq 10 min</text>
          </svg>
        </section>
      </div>
    </main>
    <div class="scroll"></div>
  </div>
</div>

<style>
  :global(body) { background: #0b0c0e; overflow: hidden; }
  * { box-sizing: border-box; }
  .screen { width: 1920px; height: 1080px; display: flex; flex-direction: column; overflow: hidden; font-family: Roboto, sans-serif; background: #535d6c; }
  svg { display: block; flex: none; }
  .ico { fill: none; stroke: currentColor; stroke-linejoin: round; }
  .swirl { fill: none; stroke: #141619; stroke-width: 2.3; stroke-linecap: round; }
  .tab .swirl { stroke: #f6f5f4; }

  .wm { height: 20px; flex: none; display: flex; background: #535d6c; font: 10.67px/18px "DejaVu Sans", sans-serif; color: #aaa; overflow: hidden; }
  .tag { width: 15px; height: 19px; background: #222; text-align: center; position: relative; flex: none; }
  .tag.sel { background: #535d6c; color: #fff; }
  .sq { position: absolute; left: 0; top: 0; width: 8px; height: 8px; border: 1px solid #fff; }
  .sq.full { background: #fff; }
  .fox { margin-left: 1px; }
  .wtitle { color: #fff; margin-left: 3px; white-space: nowrap; letter-spacing: .06px; }
  .tray { margin-left: auto; background: #222; display: flex; width: 180px; height: 19px; }
  .clock { flex: 1; margin-left: 6px; white-space: nowrap; }

  .tabs { height: 33px; flex: none; display: flex; background: #f6f5f4; margin: 0 1px; color: #2e3436; }
  .tab { width: 145.1px; flex: none; height: 33px; display: flex; align-items: center; padding: 1px 13px 0 9px; border-bottom: 1px solid #8f8e8c; position: relative; }
  .tab::after { content: ""; position: absolute; right: 0; top: 5px; bottom: 4px; width: 1px; background: #b8b6b3; }
  .tab.active { border: 1px solid #8f8e8c; border-top: 2px solid #3584e4; border-bottom: 0; padding: 0 12px 1px 8px; }
  .tab.active::after { display: none; }
  .tlabel { width: 88px; margin: 0 auto 0 6px; white-space: nowrap; overflow: hidden; flex: none; font: 14px/20px "Noto Sans", sans-serif; letter-spacing: -.27px; -webkit-mask-image: linear-gradient(90deg, #000 62%, transparent 104%); mask-image: linear-gradient(90deg, #000 62%, transparent 104%); }
  .newtab { flex: 1; display: flex; align-items: center; justify-content: center; border-bottom: 1px solid #8f8e8c; }

  .nav { height: 41px; flex: none; display: flex; align-items: center; background: #f6f5f4; margin: 0 1px; border-bottom: 1px solid #c8c6bf; font: 14.55px/20px "Noto Sans", sans-serif; color: #7a7c79; }
  .back { width: 34px; height: 34px; border: 1px solid #b4b2ae; border-radius: 50%; margin-left: 3px; display: flex; align-items: center; justify-content: center; background: #fbfbfa; flex: none; }
  .fwd { margin-left: 7px; }
  .rel { margin-left: 17px; }
  .home { margin-left: 16px; }
  .url, .srch { height: 30px; border: 1px solid #c8c6c2; border-radius: 4px; background: #fff; display: flex; align-items: center; }
  .url { width: 976px; margin-left: 123px; padding: 0 5px 0 8px; gap: 12px; }
  .vsep { width: 1px; height: 22px; background: #ccc; margin: 0 -4px 0 -3px; }
  .addr { flex: 1; margin-left: -4.5px; white-space: nowrap; }
  .addr b { font-weight: 400; color: #000; }
  .srch { width: 364px; margin-left: 11px; padding-left: 8px; gap: 6px; }
  .tools { flex: 1; display: flex; align-items: center; padding-left: 125px; }
  .tools svg:nth-of-type(2) { margin-left: 19px; }
  .tools svg:nth-of-type(3) { margin-left: 15px; }
  .tools svg:nth-of-type(4) { margin-left: 16px; }
  .tools svg:nth-of-type(5) { margin-left: 18px; }
  .vsep.tall { height: 34px; margin: 0 15px 0 13px; }

  .app { flex: 1; display: flex; margin: 0 1px 1px; background: #0b0c0e; min-height: 0; position: relative; overflow: hidden; }
  aside { width: 60px; flex: none; background: #141619; display: flex; flex-direction: column; align-items: center; color: #9fa7b3; padding: 11px 0 27px 2px; box-shadow: 2px 0 10px #000; }
  .logo { margin: 0 5px 64px 0; }
  .sitem { height: 22px; margin-bottom: 22px; }
  .grow { flex: 1; }
  .avatar { margin-bottom: 18px; }

  main { flex: 1; padding: 11px 16px 0; min-width: 0; overflow: hidden; }
  header { display: flex; align-items: center; height: 32px; color: #c7d0d9; }
  h1 { font-size: 18px; font-weight: 400; margin: 0 14px 0 8px; }
  .st { margin-right: 12.5px; }
  .btns { margin-left: auto; display: flex; color: #7b8087; }
  .btn { width: 36px; height: 32px; border: 1px solid #2c3235; border-radius: 2px; background: #141619; display: flex; align-items: center; justify-content: center; margin-left: 4px; }
  .btn.add { width: 42px; }
  .btn.mon { margin: 0 10px 0 14px; }
  .btn.time { width: 135px; font-size: 14px; font-weight: 500; justify-content: flex-start; padding: 0 6px 1px 8px; gap: 5px; }
  .btn.time span { margin-right: auto; }
  .btn.dd { margin: 0; width: 31px; border-left: 0; }

  .vars { display: flex; gap: 4px; margin-top: 28px; height: 32px; }
  .vlabel { width: 90px; background: #202226; border-radius: 2px; color: #c7d0d9; font: 500 12px/34px Roboto, sans-serif; text-align: center; }
  .vbox { width: 56px; border: 1px solid #2c3235; border-radius: 2px; padding: 7px 0 0 19px; }
  .toggle { display: block; width: 32px; height: 16px; border-radius: 8px; background: #5794f2; padding: 1px; }
  .toggle i { display: block; width: 14px; height: 14px; border-radius: 50%; background: #202226; margin-left: 16px; box-shadow: 0 0 4px #111; }

  .grid { display: grid; grid-template-columns: 527px 451px 832px; grid-template-rows: 334px 296px 223px; column-gap: 8px; row-gap: 8px; margin-top: 12px; }
  .panel { background: #141619; border: 1px solid #202226; border-radius: 3px; min-width: 0; overflow: hidden; }
  .panel > svg { margin: 0 -1px; }
  .wide { grid-column: 1 / 3; }
  .map { grid-row: 1 / 3; grid-column: 3; margin-left: -1px; }
  .last { grid-column: 1 / 4; background: none; border-color: transparent; }
  h2 { margin: 0; height: 29px; font: 500 14px/26px Roboto, sans-serif; color: #c7d0d9; text-align: center; padding: 0 18px 2px 0; display: flex; justify-content: center; align-items: center; gap: 3.5px; }
  .panel > svg.plan { margin: 7px 0 0 8px; }

  .gval { font-size: 48.3px; font-weight: 500; fill: #73bf69; text-anchor: middle; }
  .glab { font-size: 20px; fill: #c7d0d9; text-anchor: middle; }
  .chart text { font-size: 12px; fill: #b4bac2; }
  .chart .lg { fill: #c7d0d9; }
  .chart .axis { fill: #c7d0d9; font-size: 12.5px; }
  .gl { stroke: #fff; stroke-opacity: .2; stroke-width: 1; }
  .mk { stroke: #f2595c; stroke-dasharray: 3 3; }
  .mt { stroke: #f2595c; stroke-opacity: .6; }
  .ns path, .ns ellipse { vector-effect: non-scaling-stroke; }
  .ns path:not([fill]) { fill: none; }
  .ns > ellipse { fill: none; }
  .mtext { font: 8.5px "Liberation Sans", sans-serif; fill: #14401a; }
  .scroll { position: absolute; right: 0; top: 57px; width: 8px; height: 364px; border-radius: 4px; background: #35353f; }
</style>
